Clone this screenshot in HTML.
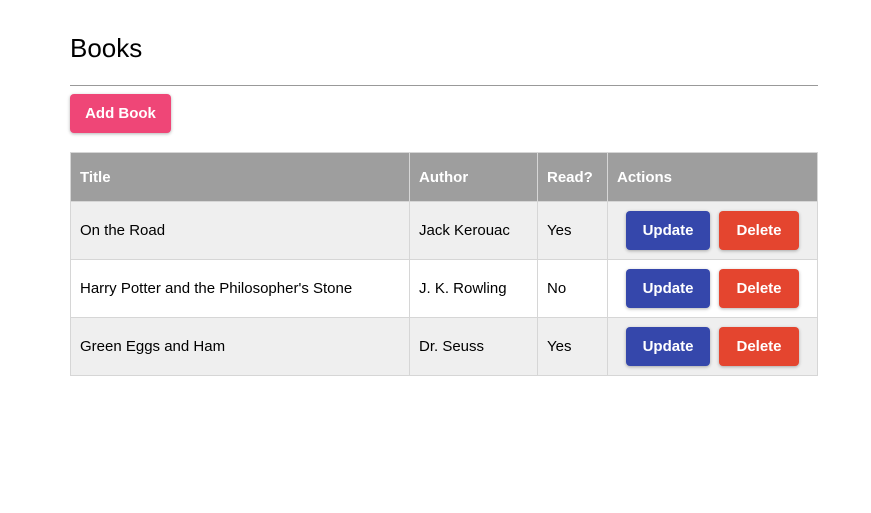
<!DOCTYPE html>
<html><head><style>
body{margin:0;background:#fff;font-family:"Liberation Sans",Arial,sans-serif;color:#000}
h1{position:absolute;left:70px;top:33px;margin:0;font-size:26px;font-weight:400;line-height:30px}
.hr{position:absolute;left:70px;top:85px;width:748px;height:1px;background:#999}
.btn{position:absolute;color:#fff;font-weight:bold;font-size:15px;border-radius:4px;box-shadow:0 1px 3px rgba(0,0,0,.3);display:flex;align-items:center;justify-content:center}
table{position:absolute;left:70px;top:152px;width:748px;border-collapse:collapse;font-size:15px;table-layout:fixed}
td,th{border:1px solid #d6d6d6;padding:0 0 0 9px;text-align:left}
th{background:#9e9e9e;color:#fff;height:48px;font-weight:bold}
tr.g td{background:#efefef}
td{height:57px;position:relative}
.u{background:#3547ab;left:18px;top:9px;width:84px;height:39px}
.d{background:#e4452f;left:111px;top:9px;width:80px;height:39px}
</style></head><body>
<h1>Books</h1>
<div class="hr"></div>
<div class="btn" style="left:70px;top:94px;width:101px;height:39px;background:#ef4677">Add Book</div>
<table>
<col style="width:339px"><col style="width:128px"><col style="width:70px"><col>
<tr><th>Title</th><th>Author</th><th>Read?</th><th>Actions</th></tr>
<tr class="g"><td>On the Road</td><td>Jack Kerouac</td><td>Yes</td><td><div class="btn u">Update</div><div class="btn d">Delete</div></td></tr>
<tr><td>Harry Potter and the Philosopher's Stone</td><td>J. K. Rowling</td><td>No</td><td><div class="btn u">Update</div><div class="btn d">Delete</div></td></tr>
<tr class="g"><td>Green Eggs and Ham</td><td>Dr. Seuss</td><td>Yes</td><td><div class="btn u">Update</div><div class="btn d">Delete</div></td></tr>
</table>
</body></html>
